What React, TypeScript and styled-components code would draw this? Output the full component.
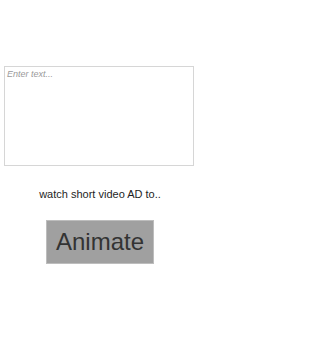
import styled, { createGlobalStyle } from 'styled-components';

const GlobalStyle = createGlobalStyle`
  html, body {
    margin: 0;
    padding: 0;
    background: #ffffff;
    font-family: 'Liberation Sans', Arial, sans-serif;
  }
`;

const Page = styled.div`
  display: flex;
  flex-direction: column;
  align-items: center;
  width: 200px;
  height: 355px;
  padding-top: 66px;
  box-sizing: border-box;
`;

const TextBox = styled.textarea`
  display: block;
  align-self: flex-start;
  margin-left: 4px;
  width: 190px;
  height: 100px;
  box-sizing: border-box;
  border: 1px solid #d6d6d6;
  border-radius: 0;
  padding: 2px 2px;
  resize: none;
  outline: none;
  font-family: 'Liberation Sans', Arial, sans-serif;
  font-size: 9px;
  color: #333;

  &::placeholder {
    color: #9a9a9a;
    font-style: italic;
  }
`;

const Hint = styled.p`
  margin: 22px 0 0;
  font-size: 11px;
  line-height: 13px;
  color: #1e1e1e;
`;

const AnimateButton = styled.button`
  margin-top: 19px;
  width: 108px;
  height: 44px;
  box-sizing: border-box;
  background: #a0a0a0;
  border: 1px solid #bdbdbd;
  border-radius: 0;
  padding: 0;
  font-family: 'Liberation Sans', Arial, sans-serif;
  font-size: 24px;
  color: #333333;
  cursor: pointer;
`;

export default function App() {
  return (
    <>
      <GlobalStyle />
      <Page>
        <TextBox placeholder="Enter text..." />
        <Hint>watch short video AD to..</Hint>
        <AnimateButton>Animate</AnimateButton>
      </Page>
    </>
  );
}
